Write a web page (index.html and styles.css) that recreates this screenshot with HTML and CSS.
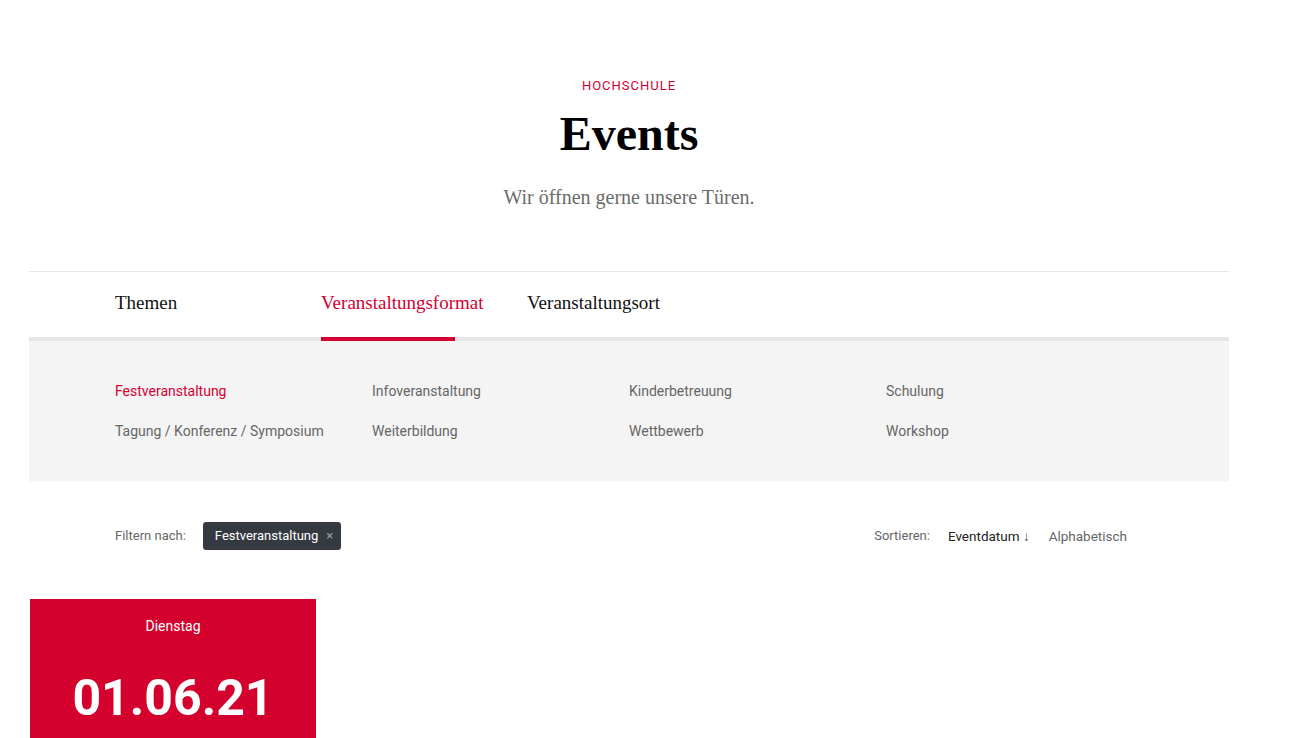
FILE: index.html
```
<!DOCTYPE html>
<html lang="de">
<head>
<meta charset="utf-8">
<title>Events</title>
<link rel="stylesheet" href="styles.css">
</head>
<body>
<div class="page">
  <header class="hero">
    <div class="eyebrow">HOCHSCHULE</div>
    <h1 class="title">Events</h1>
    <p class="lead">Wir öffnen gerne unsere Türen.</p>
  </header>

  <nav class="tabs">
    <div class="tab">Themen</div>
    <div class="tab tab-active">Veranstaltungsformat</div>
    <div class="tab">Veranstaltungsort</div>
  </nav>

  <section class="panel">
    <div class="opt opt-active">Festveranstaltung</div>
    <div class="opt">Infoveranstaltung</div>
    <div class="opt">Kinderbetreuung</div>
    <div class="opt">Schulung</div>
    <div class="opt">Tagung / Konferenz / Symposium</div>
    <div class="opt">Weiterbildung</div>
    <div class="opt">Wettbewerb</div>
    <div class="opt">Workshop</div>
  </section>

  <div class="toolbar">
    <div class="filters">
      <span class="label">Filtern nach:</span>
      <span class="chip">Festveranstaltung <span class="chip-x">×</span></span>
    </div>
    <div class="sort">
      <span class="label">Sortieren:</span>
      <span class="sort-active">Eventdatum <span class="arrow">↓</span></span>
      <span class="sort-opt">Alphabetisch</span>
    </div>
  </div>

  <div class="cards">
    <article class="card">
      <div class="card-day">Dienstag</div>
      <div class="card-date">01.06.21</div>
    </article>
  </div>
</div>
</body>
</html>
```

FILE: styles.css
```
* { box-sizing: border-box; }
html, body { margin: 0; padding: 0; background: #fff; }
body {
  font-family: "Roboto", "Liberation Sans", sans-serif;
  color: #222;
  overflow: hidden;
}
.page {
  width: 1229px;
  padding-left: 29px;
}
.hero {
  text-align: center;
  padding-top: 77px;
  height: 271px;
}
.eyebrow {
  color: #d50032;
  font-size: 13px;
  letter-spacing: 1px;
  line-height: 18px;
}
.title {
  margin: 14px 0 0;
  font-family: "Liberation Serif", serif;
  font-weight: 700;
  font-size: 48px;
  line-height: 50px;
  color: #000;
}
.lead {
  margin: 26px 0 0;
  font-family: "Liberation Serif", serif;
  font-size: 20px;
  line-height: 24px;
  color: #6b6b6b;
}
.tabs {
  display: flex;
  border-top: 1px solid #e6e6e6;
  border-bottom: 4px solid #e6e6e6;
  padding-left: 86px;
  height: 70px;
}
.tab {
  width: 206px;
  font-family: "Liberation Serif", serif;
  font-size: 19px;
  line-height: 20px;
  padding-top: 21px;
  color: #111;
  position: relative;
  white-space: nowrap;
}
.tab-active { color: #d50032; }
.tab-active::after {
  content: "";
  position: absolute;
  left: 0;
  bottom: -4px;
  width: 134px;
  height: 4px;
  background: #d50032;
}
.panel {
  background: #f4f4f4;
  height: 140px;
  padding: 40px 0 0 86px;
  display: grid;
  grid-template-columns: repeat(4, 257px);
  grid-auto-rows: 20px;
  row-gap: 20px;
}
.opt {
  font-size: 14px;
  line-height: 20px;
  color: #666;
  white-space: nowrap;
}
.opt-active { color: #d50032; }
.toolbar {
  display: flex;
  justify-content: space-between;
  align-items: center;
  padding: 25px 102px 0 86px;
  height: 84px;
}
.filters, .sort { display: flex; align-items: center; }
.label {
  font-size: 13px;
  color: #666;
}
.filters .label { margin-right: 17px; }
.chip {
  display: inline-flex;
  align-items: center;
  height: 28px;
  padding: 0 8px 0 12px;
  background: #343a40;
  color: #fff;
  border-radius: 3px;
  font-size: 13px;
}
.chip-x {
  color: #9aa0a6;
  font-size: 13px;
  margin-left: 8px;
}
.sort .label { margin-right: 18px; }
.sort-active {
  font-size: 13.5px;
  color: #222;
  margin-right: 19px;
}
.arrow { color: #2c3e66; }
.sort-opt {
  font-size: 13.5px;
  color: #666;
}
.cards {
  padding-top: 34px;
  padding-left: 1px;
}
.card {
  width: 286px;
  height: 160px;
  background: #d4002d;
  color: #fff;
  text-align: center;
  padding-top: 18px;
}
.card-day {
  font-size: 14px;
  line-height: 18px;
}
.card-date {
  margin-top: 33px;
  font-size: 50px;
  font-weight: 700;
  line-height: 60px;
}
```
